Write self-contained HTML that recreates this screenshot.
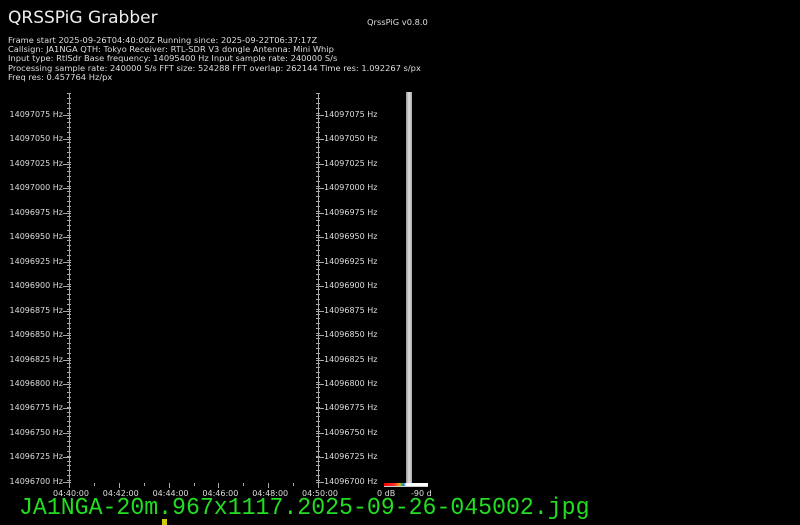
<!DOCTYPE html>
<html><head><meta charset="utf-8"><style>
body{margin:0;width:800px;height:525px;background:#000;overflow:hidden;position:relative;font-family:"DejaVu Sans","Liberation Sans",sans-serif;color:#ddd}
.a{position:absolute;white-space:nowrap}
.t{font-size:8.3px;line-height:9.2px}
.l{font-size:8px;color:#ddd}
.tk{position:absolute;background:#aaa;height:1px}
.vt{position:absolute;background:#aaa;width:1px}
</style></head><body>
<div class="a" style="left:8px;top:8px;font-size:17px;color:#eee">QRSSPiG Grabber</div>
<div class="a" style="left:367px;top:17px;font-size:8.3px">QrssPiG v0.8.0</div>
<div class="a t" style="left:8px;top:36px">Frame start 2025-09-26T04:40:00Z Running since: 2025-09-22T06:37:17Z<br>Callsign: JA1NGA QTH: Tokyo Receiver: RTL-SDR V3 dongle Antenna: Mini Whip<br>Input type: RtlSdr Base frequency: 14095400 Hz Input sample rate: 240000 S/s<br>Processing sample rate: 240000 S/s FFT size: 524288 FFT overlap: 262144 Time res: 1.092267 s/px<br>Freq res: 0.457764 Hz/px</div>
<div id="g"></div>
<div class="a" style="left:406px;top:92px;width:6px;height:391px;background:linear-gradient(90deg,#999,#ddd,#aaa)"></div>
<div class="a" style="left:384px;top:483px;width:44px;height:3px;background:linear-gradient(90deg,#e00 0%,#f33 25%,#fa0 35%,#3c3 40%,#36f 45%,#fff 50%,#fff 100%)"></div>
<div class="a" style="left:384px;top:486px;width:44px;height:1px;background:#ccc"></div>
<div class="a l" style="left:377px;top:489px">0 dB</div>
<div class="a l" style="left:411px;top:489px">-90 d</div>
<div class="a" style="left:19px;top:494px;font-family:'Liberation Mono',monospace;font-size:23.2px;color:#22dd22;line-height:26px;transform:scaleY(1.05);transform-origin:0 0">JA1NGA-20m.967x1117.2025-09-26-045002.jpg</div>
<div class="a" style="left:162px;top:519px;width:5px;height:6px;background:#cc0"></div>
<script>
var g=document.getElementById('g'),h='';
for(var i=0;i<=79;i++){var y=93+i*4.9;h+='<div class="tk" style="left:67px;top:'+y+'px;width:4px"></div><div class="tk" style="left:316px;top:'+y+'px;width:4px"></div>';}
for(var k=0;k<16;k++){var y=115+k*24.45,f=14097075-k*25;
h+='<div class="tk" style="left:63px;top:'+y+'px;width:8px"></div><div class="tk" style="left:316px;top:'+y+'px;width:8px"></div>';
h+='<div class="a l" style="right:737px;top:'+(y-5)+'px">'+f+' Hz</div><div class="a l" style="left:324px;top:'+(y-5)+'px">'+f+' Hz</div>';}
h+='<div class="vt" style="left:69px;top:93px;height:390px"></div><div class="vt" style="left:318px;top:93px;height:390px"></div>';
var ts=['04:40:00','04:42:00','04:44:00','04:46:00','04:48:00','04:50:00'];
for(var m=0;m<=10;m++){var x=69+m*24.9;h+='<div class="vt" style="left:'+x+'px;top:483px;height:'+(m%2?3:5)+'px"></div>';}
for(var j=0;j<6;j++){h+='<div class="a l" style="left:'+(53+j*49.8)+'px;top:489px">'+ts[j]+'</div>';}
g.innerHTML=h;
</script>
</body></html>
